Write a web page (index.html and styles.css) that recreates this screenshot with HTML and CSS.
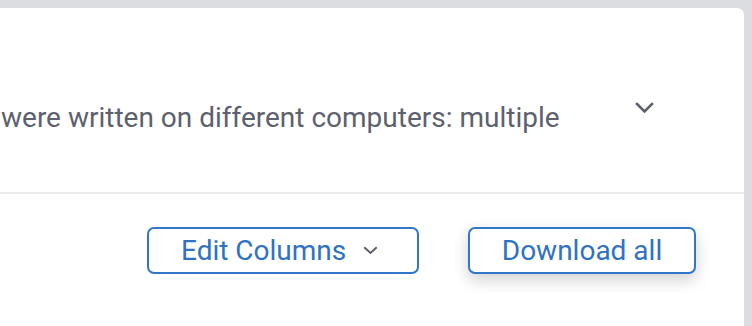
FILE: index.html
```html
<!DOCTYPE html>
<html>
<head>
<meta charset="utf-8">
<link rel="stylesheet" href="styles.css">
</head>
<body>
<div class="card">
  <div class="header">
    <p class="summary">were written on different computers: multiple</p>
    <svg class="chev-lg" width="19" height="12" viewBox="0 0 19 12"><path d="M2 2 L9.5 9.5 L17 2" fill="none" stroke="#5b5f6b" stroke-width="2.6" stroke-linecap="square"/></svg>
  </div>
  <div class="actions">
    <button class="btn edit"><span>Edit Columns</span>
      <svg class="chev-sm" width="15" height="9" viewBox="0 0 15 9"><path d="M2 2 L7.5 7 L13 2" fill="none" stroke="#5b5f6b" stroke-width="2" stroke-linecap="square"/></svg>
    </button>
    <button class="btn download">Download all</button>
  </div>
</div>
</body>
</html>
```
FILE: styles.css
```css
html, body {
  margin: 0;
  padding: 0;
  background: #dcdde1;
  height: 326px;
  overflow: hidden;
}
.card {
  margin-top: 8px;
  margin-right: 8px;
  background: #ffffff;
  border-top-right-radius: 7px;
  height: 318px;
  font-family: Roboto, "Liberation Sans", sans-serif;
}
.header {
  height: 186px;
  display: flex;
  align-items: flex-start;
  padding-top: 94px;
  box-sizing: border-box;
  border-bottom: 2px solid #ececec;
}
.summary {
  margin: 0;
  padding-left: 1px;
  font-size: 28px;
  line-height: 32px;
  color: #5d616e;
  width: 634px;
}
.chev-lg {
  margin-top: 0;
}
.actions {
  display: flex;
  justify-content: flex-end;
  gap: 49px;
  padding: 33px 48px 0 0;
}
.btn {
  font-family: Roboto, "Liberation Sans", sans-serif;
  font-size: 28px;
  color: #2f72c4;
  background: #ffffff;
  border: 2px solid #3276c8;
  border-radius: 7px;
  height: 47px;
  display: flex;
  align-items: center;
  padding: 0;
  box-sizing: border-box;
}
.edit {
  width: 272px;
  padding-left: 32px;
}
.chev-sm {
  margin-left: 17px;
}
.download {
  width: 228px;
  justify-content: center;
  box-shadow: 0 6px 16px rgba(0, 0, 0, 0.18);
}
```
